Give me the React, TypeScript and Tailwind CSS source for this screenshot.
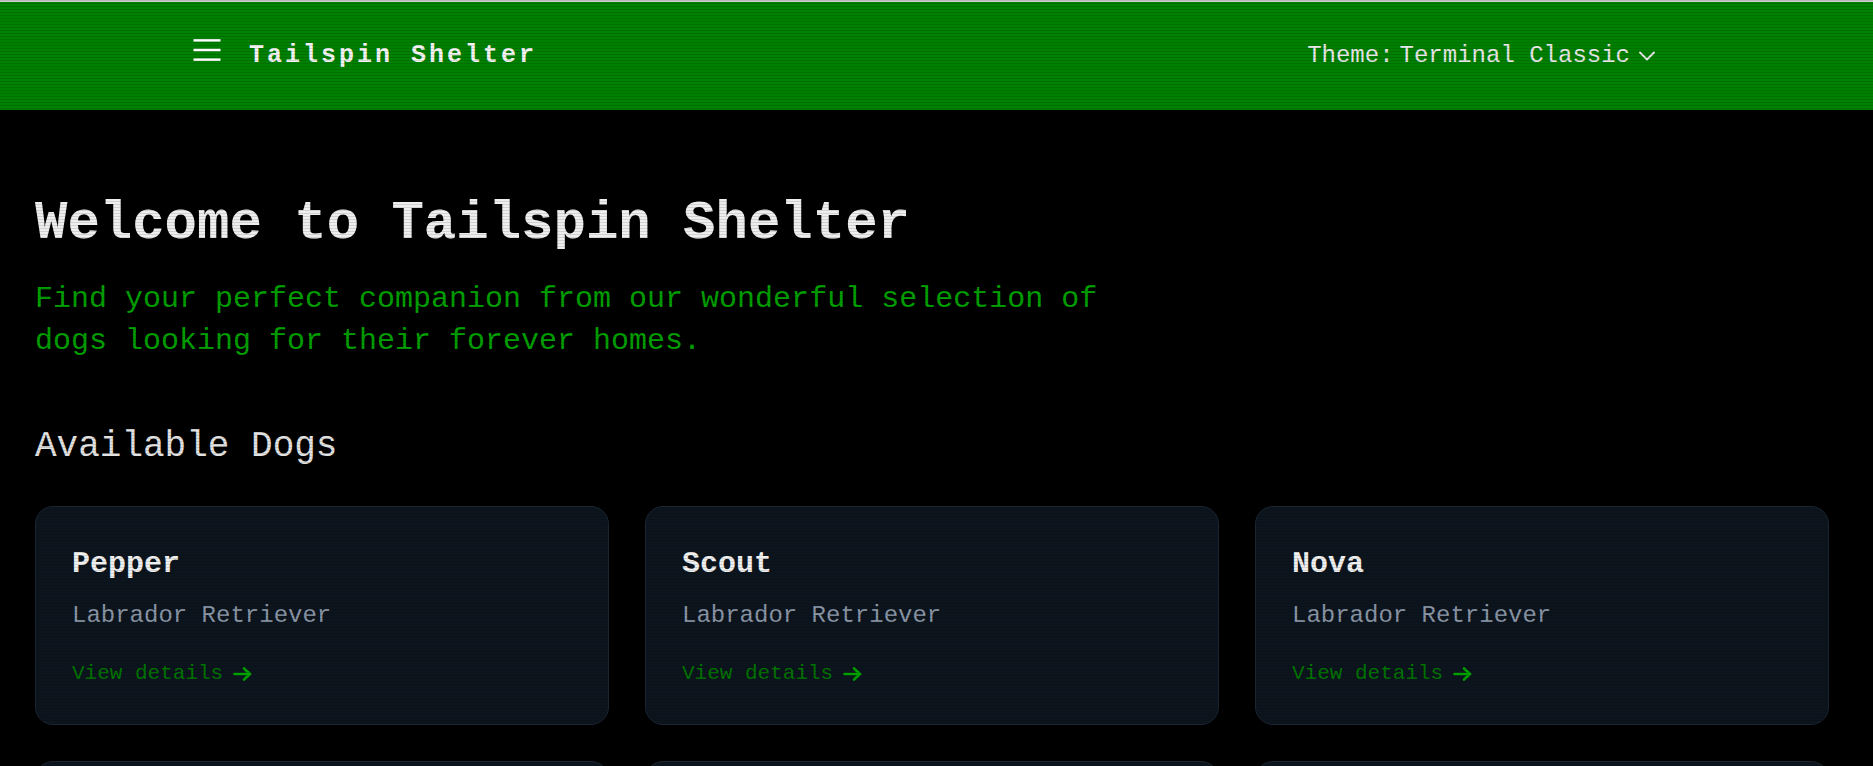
import { ChevronDown } from 'lucide-react'

const dogs = [
  { name: 'Pepper', breed: 'Labrador Retriever' },
  { name: 'Scout', breed: 'Labrador Retriever' },
  { name: 'Nova', breed: 'Labrador Retriever' },
  { name: 'Biscuit', breed: 'Labrador Retriever' },
  { name: 'Maple', breed: 'Labrador Retriever' },
  { name: 'Ziggy', breed: 'Labrador Retriever' },
]

// hamburger sits a little above the text's center, like in the original
function MenuIcon() {
  return (
    <svg width="28" height="36" viewBox="0 0 28 36" fill="none" stroke="currentColor" strokeWidth="2.6" strokeLinecap="butt">
      <line x1="0.5" y1="2.3" x2="27.5" y2="2.3" />
      <line x1="0.5" y1="12" x2="27.5" y2="12" />
      <line x1="0.5" y1="21.7" x2="27.5" y2="21.7" />
    </svg>
  )
}

function ArrowIcon() {
  return (
    <svg width="19" height="16" viewBox="0 0 19 16" fill="none" stroke="currentColor" strokeWidth="2.6" strokeLinecap="round" strokeLinejoin="round">
      <line x1="1.5" y1="8" x2="17" y2="8" />
      <polyline points="11,2.5 17,8 11,13.5" />
    </svg>
  )
}

function DogCard({ name, breed }: { name: string; breed: string }) {
  return (
    <div className="rounded-[18px] border border-[#1c2633] bg-[#0c141d] p-[36px] pb-[35px]">
      <h3 className="text-[30px] leading-[42px] font-bold text-[#f0f0f0]">{name}</h3>
      <p className="mt-[13px] text-[24px] leading-[36px] text-[#8a96a6]">{breed}</p>
      <a className="mt-[25px] flex items-center gap-[10px] text-[21px] leading-[30px] text-[#007400]">
        View details
        <span className="text-[#00a000]">
          <ArrowIcon />
        </span>
      </a>
    </div>
  )
}

export default function App() {
  return (
    <div className="relative min-h-screen overflow-hidden bg-black font-['Liberation_Mono','Courier_New',monospace]">
      <div className="h-[2px] bg-[#d0d0d0]" />
      <header className="flex h-[108px] items-center justify-between bg-[#008000] pl-[193px] pr-[212px]">
        <div className="flex items-center gap-[28px] text-white">
          <MenuIcon />
          <span className="text-[25px] font-bold tracking-[3px] text-[#f4f4f4]">Tailspin Shelter</span>
        </div>
        <div className="flex items-center text-[24px] text-[#e8e8e8]">
          <span className="mr-[6px]">Theme:</span>
          <span>Terminal Classic</span>
          <ChevronDown className="ml-[3px] h-[28px] w-[28px]" strokeWidth={1.6} />
        </div>
      </header>

      <main className="pl-[35px] pr-[44px] pt-[84px]">
        <h1 className="text-[54px] leading-[60px] font-bold text-[#eeeeee]">Welcome to Tailspin Shelter</h1>
        <p className="mt-[24px] w-[1120px] text-[30px] leading-[42px] text-[#00a000]">
          Find your perfect companion from our wonderful selection of dogs looking for their forever homes.
        </p>

        <h2 className="mt-[61px] text-[36px] leading-[48px] text-[#e2e2e2]">Available Dogs</h2>

        <div className="mt-[35px] grid grid-cols-3 gap-[36px]">
          {dogs.map((d) => (
            <DogCard key={d.name} name={d.name} breed={d.breed} />
          ))}
        </div>
      </main>

      {/* scanlines */}
      <div className="pointer-events-none absolute inset-0 bg-[repeating-linear-gradient(180deg,rgba(0,0,0,0.12)_0px,rgba(0,0,0,0.12)_1px,transparent_1px,transparent_3px)]" />
    </div>
  )
}
